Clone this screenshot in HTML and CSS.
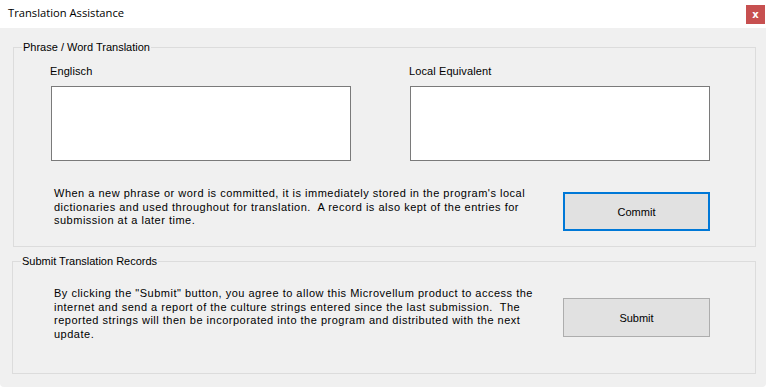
FILE: index.html
```html
<!DOCTYPE html>
<html lang="en">
<head>
  <meta charset="UTF-8" />
  <title>Translation Assistance</title>
  <link rel="stylesheet" href="styles.css">
</head>
<body>
  <div class="window">
    <div class="titlebar">
      <span class="title">Translation Assistance</span>
      <button class="close">x</button>
    </div>

    <div class="content">
      <fieldset class="group group-phrase">
        <legend>Phrase / Word Translation</legend>
        <div class="fields">
          <div class="field">
            <label>Englisch</label>
            <textarea class="textbox"></textarea>
          </div>
          <div class="field">
            <label>Local Equivalent</label>
            <textarea class="textbox"></textarea>
          </div>
        </div>
        <div class="action-row">
          <p class="note">When a new phrase or word is committed, it is immediately stored in the program's local<br>dictionaries and used throughout for translation.&nbsp; A record is also kept of the entries for<br>submission at a later time.</p>
          <button class="btn btn-commit">Commit</button>
        </div>
      </fieldset>

      <fieldset class="group group-submit">
        <legend>Submit Translation Records</legend>
        <div class="action-row">
          <p class="note">By clicking the "Submit" button, you agree to allow this Microvellum product to access the<br>internet and send a report of the culture strings entered since the last submission.&nbsp; The<br>reported strings will then be incorporated into the program and distributed with the next<br>update.</p>
          <button class="btn btn-submit">Submit</button>
        </div>
      </fieldset>
    </div>
  </div>
</body>
</html>
```

FILE: styles.css
```css
html, body {
  margin: 0;
  padding: 0;
  background: #ffffff;
}

body {
  font-family: "Liberation Sans", Arial, sans-serif;
  font-size: 11px;
  color: #000000;
}

.window {
  width: 766px;
  height: 387px;
  background: #f0f0f0;
  border-radius: 0 0 4px 4px;
  overflow: hidden;
}

.titlebar {
  height: 28px;
  background: #ffffff;
  display: flex;
  align-items: flex-start;
  justify-content: space-between;
}

.title {
  font-family: "Open Sans", "Noto Sans", sans-serif;
  font-size: 11.2px;
  margin: 5px 0 0 8px;
  line-height: 16px;
}

.close {
  width: 19px;
  height: 19px;
  margin: 5px 1px 0 0;
  padding: 0;
  border: none;
  background: #c75050;
  color: #ffffff;
  font-family: "DejaVu Sans", sans-serif;
  font-weight: bold;
  font-size: 10px;
  line-height: 17px;
}

.content {
  padding: 12px 10px 0 13px;
}

.group {
  min-width: 0;
  margin: 0;
  border: 1px solid #dcdcdc;
  padding: 10px 45px 15px 36px;
}

.group legend {
  margin-left: -28px;
  padding: 0 1px;
  line-height: 14px;
}

.group-submit {
  margin: 7px 0 0 -1px;
  padding: 19px 45px 32px 37px;
}

.group-submit legend {
  margin-left: -29px;
}

.fields {
  display: flex;
}

.field {
  display: flex;
  flex-direction: column;
}

.field:first-child {
  width: 359px;
}

.field label {
  line-height: 14px;
  letter-spacing: 0.1px;
}

.textbox {
  box-sizing: border-box;
  width: 300px;
  height: 75px;
  margin: 8px 0 0 1px;
  padding: 0;
  border: 1px solid #7a7a7a;
  background: #ffffff;
  resize: none;
}

.action-row {
  display: flex;
  align-items: flex-start;
  margin-top: 26px;
}

.group-submit .action-row {
  margin-top: 0;
}

.note {
  margin: 0 0 0 4px;
  line-height: 13.6px;
  letter-spacing: 0.5px;
  white-space: nowrap;
}

.btn {
  box-sizing: border-box;
  width: 147px;
  height: 39px;
  margin-left: auto;
  padding: 0;
  background: #e1e1e1;
  font-family: "Liberation Sans", Arial, sans-serif;
  font-size: 11px;
  color: #000000;
}

.btn-commit {
  margin-top: 5px;
  border: 2px solid #0078d7;
}

.btn-submit {
  margin-top: 11px;
  border: 1px solid #adadad;
}
```
